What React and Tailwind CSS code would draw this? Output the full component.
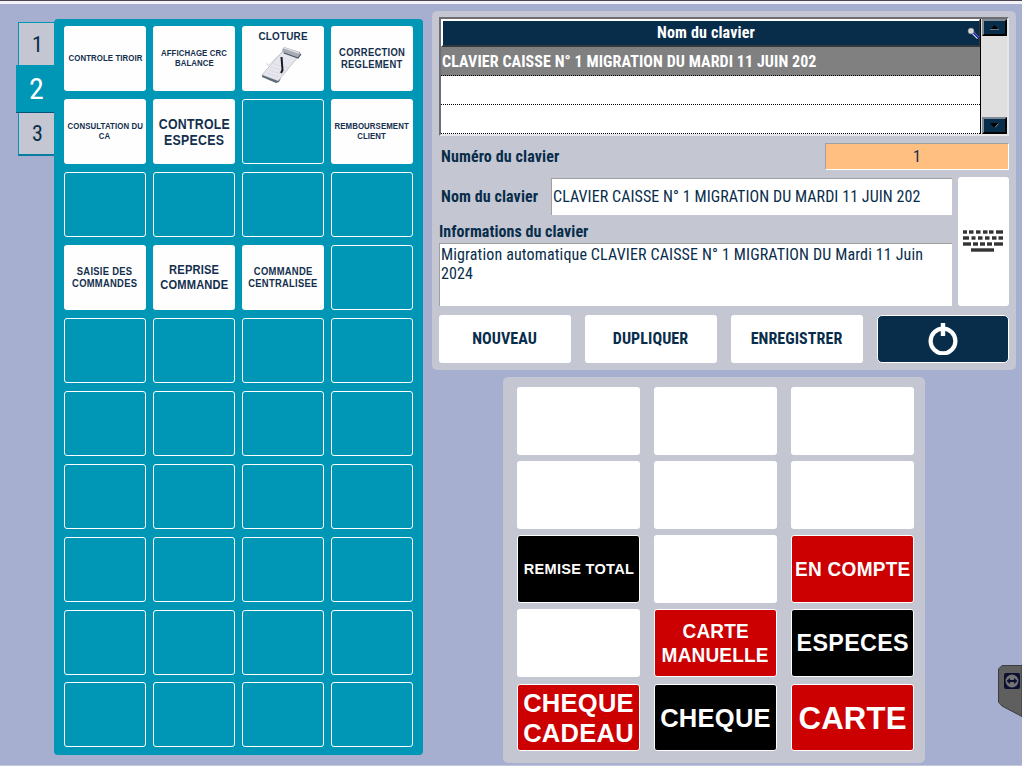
import React from 'react';

const COND = "font-['Roboto_Condensed','Roboto',sans-serif] [font-stretch:75%] tracking-[0.07px]";

const T8 = { cls: 'text-[9px] leading-[10px] tracking-[0.1px] pb-[2px]', squeeze: 'scale-x-[0.87]' };
const T10 = { cls: 'text-[10px] leading-[12px] tracking-[0.3px]', squeeze: 'scale-x-[0.94]' };
const T13 = { cls: 'text-[12.5px] leading-[15px] tracking-[0.2px]', squeeze: 'scale-x-[0.89]' };

const keys = {
  0: { lines: ['CONTROLE TIROIR'], ...T8 },
  1: { lines: ['AFFICHAGE CRC', 'BALANCE'], ...T8 },
  2: { lines: ['CLOTURE'], cls: 'text-[10.5px] leading-[12px] tracking-[0.2px]', squeeze: 'scale-x-[0.945]', pad: true },
  3: { lines: ['CORRECTION', 'REGLEMENT'], ...T10 },
  4: { lines: ['CONSULTATION DU', 'CA'], ...T8 },
  5: { lines: ['CONTROLE', 'ESPECES'], cls: 'text-[14px] leading-[16px] tracking-[0.3px]', squeeze: 'scale-x-[0.88]' },
  7: { lines: ['REMBOURSEMENT', 'CLIENT'], ...T8 },
  12: { lines: ['SAISIE DES', 'COMMANDES'], ...T10 },
  13: { lines: ['REPRISE', 'COMMANDE'], ...T13 },
  14: { lines: ['COMMANDE', 'CENTRALISEE'], ...T10 },
};

const RED = 'bg-[#cc0000]';
const pads = {
  6: { bg: 'bg-black', lines: ['REMISE TOTAL'], cls: 'text-[15px] leading-[18px] tracking-[0.3px]', squeeze: 'scale-x-[0.97]' },
  8: { bg: RED, lines: ['EN COMPTE'], cls: 'text-[20px] leading-[24px] tracking-[0.3px]', squeeze: 'scale-x-[0.95]' },
  10: { bg: RED, lines: ['CARTE', 'MANUELLE'], cls: 'text-[21px] leading-[24px] tracking-[0.2px]', squeeze: 'scale-x-[0.905]' },
  11: { bg: 'bg-black', lines: ['ESPECES'], cls: 'text-[24px] leading-[28px] tracking-[0.3px]', squeeze: 'scale-x-[0.973]' },
  12: { bg: RED, lines: ['CHEQUE', 'CADEAU'], cls: 'text-[26px] leading-[30px] tracking-[0.3px]', squeeze: 'scale-x-[0.98]' },
  13: { bg: 'bg-black', lines: ['CHEQUE'], cls: 'text-[26px] leading-[30px] tracking-[0.3px]', squeeze: 'scale-x-[0.98]' },
  14: { bg: RED, lines: ['CARTE'], cls: 'text-[32px] leading-[36px] tracking-[0.2px]', squeeze: 'scale-x-[0.973]' },
};

function Lines({ item }) {
  return item.lines.map((l) => <span key={l} className={`block whitespace-nowrap ${item.squeeze}`}>{l}</span>);
}

function NotepadIcon() {
  return (
    <svg width="42" height="38" viewBox="0 0 42 38" className="mt-[4px] mr-[4px] shrink-0">
      <path d="M23 5 L38 11 L18 35 L2 29 Z" fill="#e6e6ee" stroke="#b5b5bf" strokeWidth=".7" />
      <path d="M2 29 L18 35 L21 32 L19 36 L16 37 L2 31 Z" fill="#5c6b78" />
      <path d="M23 5 L8 20 L7 17" fill="none" stroke="#c9c9d2" strokeWidth=".8" />
      <path d="M24 1 L40 6 L41 9 L38 12 L23 7 L22 4 Z" fill="#a9abb6" />
      <path d="M24 2 L39 7" stroke="#e8e8ee" strokeWidth="1.2" />
      <path d="M24 7 L38 12 L41 8" fill="none" stroke="#4d5663" strokeWidth="1.2" />
      <path d="M14 18 L28 22 M11 21 L25 25 M9 24 L22 28 M7 27 L19 31" stroke="#d3c3d8" strokeWidth=".7" strokeDasharray="1.5 1" />
      <path d="M21.5 11 L22.5 24 L21 27" fill="none" stroke="#171a22" strokeWidth="2" />
    </svg>
  );
}

function Key({ item }) {
  if (!item) return <div className="h-[65px] rounded-[3px] border border-white" />;
  return (
    <button
      className={`flex h-[65px] flex-col items-center rounded-[3px] bg-[#fefefe] text-center font-bold text-[#142f4d] ${
        item.pad ? 'justify-start pt-[4px]' : 'justify-center'
      } ${item.cls}`}
    >
      <Lines item={item} />
      {item.pad && <NotepadIcon />}
    </button>
  );
}

function PadKey({ item }) {
  if (!item) return <div className="h-[68px] rounded-[3px] bg-white" />;
  return (
    <button
      className={`flex h-[68px] flex-col items-center justify-center rounded-[3px] border border-white text-center font-bold text-white ${item.bg} ${item.cls}`}
    >
      <Lines item={item} />
    </button>
  );
}

function Arrow({ down }) {
  return (
    <button className="flex h-[17px] w-[25px] items-center justify-center border-2 border-t-[#808a94] border-l-[#808a94] border-r-black border-b-black bg-[#082d4b]">
      <svg width="9" height="5" viewBox="0 0 9 5">
        {down ? (
          <>
            <path d="M0 0 H9 L4.5 5 Z" fill="#000" />
            <path d="M8.5 .5 L5 4.5" stroke="#8a939c" />
          </>
        ) : (
          <>
            <path d="M4.5 0 L9 5 H0 Z" fill="#000" />
            <path d="M0 4.5 H9" stroke="#6b7681" />
          </>
        )}
      </svg>
    </button>
  );
}

function ListRow({ children, selected }) {
  return (
    <div
      className={`flex h-[29px] items-center border-b border-dotted border-black pt-[2px] pl-[1px] text-[16px] font-bold whitespace-nowrap text-white ${
        selected ? 'bg-[#808080]' : 'bg-white'
      }`}
    >
      {children}
    </div>
  );
}

function KeyboardIcon() {
  const rows = [
    [0, [[0, 4], [6, 4.5], [13, 4.5], [20, 4.5], [26, 4.5], [33, 7]]],
    [6, [[0, 6], [8.5, 4], [15, 4.5], [22, 4.5], [29, 4.5], [35.5, 4.5]]],
    [12, [[0, 8], [10, 5], [17, 5], [24, 5], [31, 9]]],
    [18, [[8, 23]]],
  ];
  return (
    <svg width="40" height="22" viewBox="0 0 40 22">
      {rows.flatMap(([y, ks]) =>
        ks.map(([x, w]) => <rect key={`${y}-${x}`} x={x} y={y + 0.3} width={w} height="3.4" fill="#333" />)
      )}
    </svg>
  );
}

const action = 'flex h-[48px] w-[132px] items-center justify-center rounded-[3px] bg-white pr-[1px] text-[16px] font-bold';

export default function App() {
  return (
    <div className="relative h-[766px] w-[1022px] overflow-hidden border-b border-b-[#c3c8dd] bg-[#a6afcf] font-['Liberation_Sans',Arial,sans-serif] text-[#082d4b]">
      <div className="h-[4px] border-t border-t-[#4d4653] bg-[#f4f1f8]" />
      <div className="flex">
        <nav className={`flex w-[54px] shrink-0 flex-col items-end pt-[18px] ${COND}`}>
          <div className="flex h-[43px] w-[36px] items-center justify-center border-t border-l border-[#0097b7] bg-[#c4c6d2] pl-[2px] text-[22px]">1</div>
          <div className="flex h-[48px] w-[38px] items-center justify-center border-b border-b-[#08527a] bg-[#0097b7] pb-[1px] pl-[3px] text-[30px] text-white">2</div>
          <div className="flex h-[43px] w-[36px] items-center justify-center border-b-2 border-l border-[#0097b7] border-b-[#087da0] bg-[#c4c6d2] pl-[2px] text-[22px]">3</div>
        </nav>

        <main className="mt-[15px] grid h-[736px] w-[369px] shrink-0 grid-cols-[repeat(4,82px)] grid-rows-[repeat(9,73px)_65px] content-start gap-x-[7px] rounded-[4px] bg-[#0097b7] pt-[7px] pl-[10px]">
          {Array.from({ length: 36 }, (_, i) => <Key key={i} item={keys[i]} />)}
          {Array.from({ length: 4 }, (_, i) => (
            <div key={`last-${i}`} className="-mt-px">
              <Key />
            </div>
          ))}
        </main>

        <div className="ml-[9px] flex w-[584px] shrink-0 flex-col items-center pt-[7px]">
          <section className={`h-[359px] w-full rounded-[5px] bg-[#c4c6d2] pt-[6px] pr-[7px] pl-[7px] ${COND}`}>
            <div className="flex h-[119px] w-[570px] border-t-2 border-r-2 border-b-2 border-l-2 border-t-[#6c6c72] border-r-[#e6e6ea] border-b-[#e6e6ea] border-l-[#6c6c72] bg-[#dfdfdf]">
              <div className="w-[540px] border-r border-black">
                <div className="flex h-[28px] items-center border-t-2 border-r border-b-2 border-l-2 border-t-white border-r-[#33373b] border-b-[#33373b] border-l-white bg-[#082d4b] text-[16px] font-bold text-white">
                  <span className="flex-1 pr-[10px] text-center tracking-[0.15px]">Nom du clavier</span>
                  <svg width="13" height="12" viewBox="0 0 13 12" className="-mr-px -ml-[12px]">
                    <path d="M5 5 L11 11" stroke="#fff" strokeWidth="2.5" />
                    <path d="M5.5 5 L11.5 11" stroke="#1414c8" strokeWidth="1.6" />
                    <circle cx="4" cy="4" r="3" fill="#d9d9d9" stroke="#777" strokeWidth=".6" />
                  </svg>
                </div>
                <ListRow selected>CLAVIER CAISSE N° 1 MIGRATION DU MARDI 11 JUIN 202</ListRow>
                <ListRow />
                <ListRow />
              </div>
              <div className="flex flex-1 flex-col items-end justify-between">
                <Arrow />
                <Arrow down />
              </div>
            </div>

            <div className="mt-[7px] flex h-[27px] w-[570px] items-center justify-between pl-[2px] text-[16px]">
              <span className="font-bold tracking-[0.12px]">Numéro du clavier</span>
              <span className="flex h-[27px] w-[184px] items-center justify-center border border-t-[#a0a0a0] border-r-white border-b-white border-l-[#a0a0a0] bg-[#ffbf80]">1</span>
            </div>

            <div className="mt-[7px] flex h-[129px] w-[570px] justify-between">
              <div className="w-[513px]">
                <div className="mt-px flex h-[37px] items-center justify-between pl-[2px] text-[16px]">
                  <span className="font-bold tracking-[0.1px]">Nom du clavier</span>
                  <span className="flex h-[37px] w-[401px] items-center border-t border-l border-[#a0a0a0] bg-white pl-[1px] whitespace-nowrap">CLAVIER CAISSE N° 1 MIGRATION DU MARDI 11 JUIN 202</span>
                </div>
                <div className="flex h-[28px] items-center pt-[6px] text-[16px] font-bold tracking-[0.05px]">Informations du clavier</div>
                <div className="h-[63px] border-t border-l border-[#a0a0a0] bg-white pt-[1px] pr-[24px] pl-[1px] text-[16px] leading-[19px] tracking-[0.14px]">
                  Migration automatique CLAVIER CAISSE N° 1 MIGRATION DU Mardi 11 Juin 2024
                </div>
              </div>
              <button className="flex w-[51px] items-center justify-center rounded-[3px] bg-white pr-[1px] pb-[2px]">
                <KeyboardIcon />
              </button>
            </div>

            <div className="mt-[9px] flex w-[570px] justify-between">
              <button className={action}>NOUVEAU</button>
              <button className={action}>DUPLIQUER</button>
              <button className={action}>ENREGISTRER</button>
              <button className="flex h-[48px] w-[132px] items-center justify-center rounded-[5px] border border-white bg-[#082d4b]">
                <svg width="30" height="32" viewBox="0 0 30 32">
                  <circle cx="15" cy="18" r="12.4" fill="none" stroke="#fff" strokeWidth="4.2" />
                  <path d="M15 0 V13" stroke="#fff" strokeWidth="4.4" />
                </svg>
              </button>
            </div>
          </section>

          <section className="mt-[7px] mr-[20px] grid h-[386px] w-[422px] grid-cols-[repeat(3,123px)] grid-rows-[repeat(4,74px)_68px] content-start gap-x-[14px] rounded-[5px] bg-[#c4c6d2] pt-[10px] pl-[14px]">
            {Array.from({ length: 12 }, (_, i) => <PadKey key={i} item={pads[i]} />)}
            {[12, 13, 14].map((i) => (
              <div key={i} className="mt-px flex flex-col">
                <PadKey item={pads[i]} />
              </div>
            ))}
          </section>
        </div>
      </div>

      <svg className="absolute top-[665px] right-0" width="24" height="52" viewBox="0 0 24 52">
        <path d="M4 .5 H24 V51.5 L4 41 L.5 37 V4 Z" fill="#5f5f5f" stroke="#3c3c40" />
        <rect x="6" y="8" width="16" height="16" rx="2" fill="#0b1030" />
        <circle cx="14" cy="16" r="6.5" fill="#737373" />
        <path d="M8.5 16 L12 13 V15 H16 V13 L19.5 16 L16 19 V17 H12 V19 Z" fill="#0b1030" />
      </svg>
    </div>
  );
}
